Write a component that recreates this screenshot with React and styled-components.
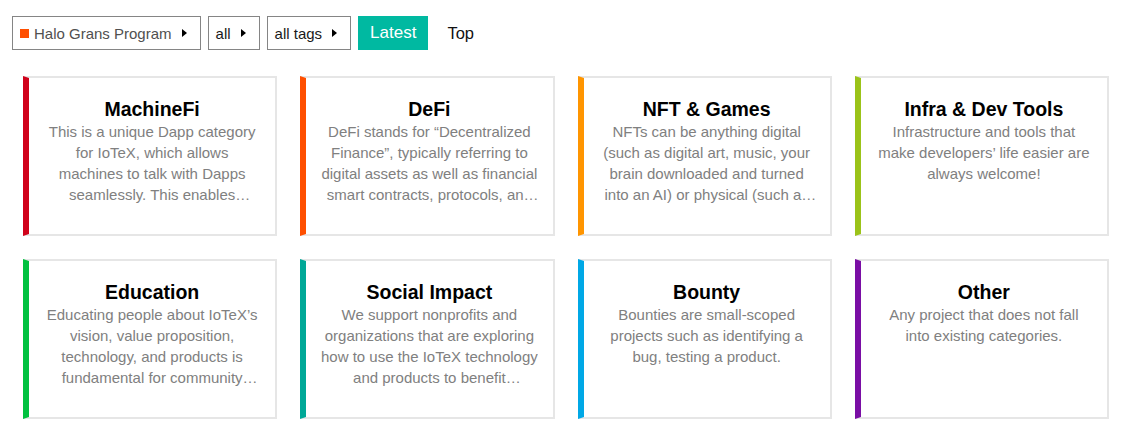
import React from 'react';
import styled, { createGlobalStyle } from 'styled-components';

const GlobalStyle = createGlobalStyle`
    body {
        margin: 0;
        background: #fff;
        font-family: "Liberation Sans", Arial, sans-serif;
    }
`;

const Page = styled.div`
    padding: 16px 24px 0 12px;
`;

const Toolbar = styled.div`
    display: flex;
    align-items: center;
    gap: 7px;
    height: 34px;
`;

const Dropdown = styled.button`
    display: flex;
    align-items: center;
    height: 34px;
    box-sizing: border-box;
    padding: 0 13px 0 7px;
    border: 1px solid #858585;
    background: #fff;
    font-family: inherit;
    font-size: 15px;
    color: ${p => p.muted ? '#505050' : '#1a1a1a'};
    cursor: pointer;
`;

const Swatch = styled.span`
    width: 9px;
    height: 9px;
    margin-right: 5px;
    background: #ff4f00;
`;

const Caret = styled.span`
    width: 0;
    height: 0;
    margin-left: 10px;
    border-left: 5px solid #000;
    border-top: 4px solid transparent;
    border-bottom: 4px solid transparent;
`;

const Tab = styled.button`
    height: 34px;
    padding: 0 12px;
    border: none;
    font-family: inherit;
    font-size: ${p => p.active ? '17px' : '16.5px'};
    background: ${p => p.active ? '#00b9a1' : 'transparent'};
    color: ${p => p.active ? '#fff' : '#111'};
    cursor: pointer;
`;

const Grid = styled.div`
    display: grid;
    grid-template-columns: repeat(4, 1fr);
    gap: 23px;
    margin-top: 26px;
    padding-left: 11px;
`;

const Card = styled.div`
    height: 160px;
    box-sizing: border-box;
    padding: 20px 14.5px 0;
    border: 2px solid #e6e6e6;
    border-left: 6px solid ${p => p.color};
    text-align: center;
    background: #fff;
`;

const Title = styled.h3`
    margin: 0;
    font-size: 19.5px;
    line-height: 23px;
    font-weight: bold;
    color: #000;
`;

const Desc = styled.p`
    margin: 0;
    font-size: 15px;
    line-height: 21px;
    color: #808080;
    display: -webkit-box;
    -webkit-box-orient: vertical;
    -webkit-line-clamp: 4;
    overflow: hidden;
`;

const categories = [
    {
        name: 'MachineFi',
        color: '#d0021b',
        text: 'This is a unique Dapp category for IoTeX, which allows machines to talk with Dapps seamlessly. This enables machines to own and trade their data and services.',
    },
    {
        name: 'DeFi',
        color: '#ff4f00',
        text: 'DeFi stands for “Decentralized Finance”, typically referring to digital assets as well as financial smart contracts, protocols, and applications built on blockchain.',
    },
    {
        name: 'NFT & Games',
        color: '#ff9500',
        text: 'NFTs can be anything digital (such as digital art, music, your brain downloaded and turned into an AI) or physical (such as real estate and collectibles).',
    },
    {
        name: 'Infra & Dev Tools',
        color: '#9bc319',
        text: 'Infrastructure and tools that make developers’ life easier are always welcome!',
    },
    {
        name: 'Education',
        color: '#00c13f',
        text: 'Educating people about IoTeX’s vision, value proposition, technology, and products is fundamental for community growth and adoption.',
    },
    {
        name: 'Social Impact',
        color: '#00a897',
        text: 'We support nonprofits and organizations that are exploring how to use the IoTeX technology and products to benefit communities around the world.',
    },
    {
        name: 'Bounty',
        color: '#00a8e6',
        text: 'Bounties are small-scoped projects such as identifying a bug, testing a product.',
    },
    {
        name: 'Other',
        color: '#7a0ea5',
        text: 'Any project that does not fall into existing categories.',
    },
];

const App = () => {
    return (
        <Page>
            <GlobalStyle />
            <Toolbar>
                <Dropdown muted>
                    <Swatch />
                    Halo Grans Program
                    <Caret />
                </Dropdown>
                <Dropdown>
                    all
                    <Caret />
                </Dropdown>
                <Dropdown>
                    all tags
                    <Caret />
                </Dropdown>
                <Tab active>Latest</Tab>
                <Tab>Top</Tab>
            </Toolbar>
            <Grid>
                {categories.map(c => (
                    <Card key={c.name} color={c.color}>
                        <Title>{c.name}</Title>
                        <Desc>{c.text}</Desc>
                    </Card>
                ))}
            </Grid>
        </Page>
    );
};

export default App;
